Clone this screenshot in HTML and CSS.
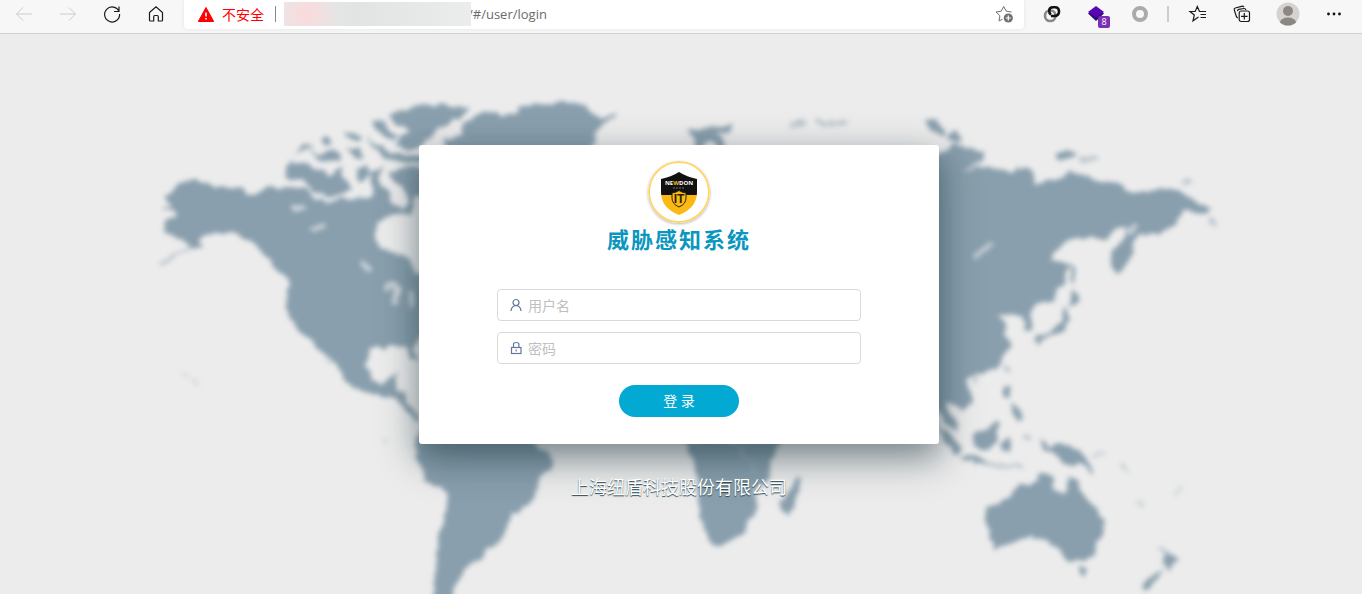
FILE: index.html
```html
<!DOCTYPE html>
<html lang="zh-CN">
<head>
<meta charset="utf-8">
<title>威胁感知系统</title>
<link rel="stylesheet" href="styles.css">
</head>
<body>
<header class="toolbar">
  <nav class="nav-group">
    <button class="tool faded" aria-label="后退"><svg viewBox="0 0 20 20"><path d="M18 10H2.500M9 3.500L2.500 10L9 16.500"/></svg></button>
    <button class="tool faded" aria-label="前进"><svg viewBox="0 0 20 20"><path d="M2 10H17.500M11 3.500L17.500 10L11 16.500"/></svg></button>
    <button class="tool" aria-label="刷新"><svg class="bold" viewBox="0 0 20 20"><path d="M17 7.500A7.500 7.500 0 1 0 17.600 10M17 2.500V7.500H12"/></svg></button>
    <button class="tool" aria-label="主页"><svg class="bold" viewBox="0 0 20 20"><path d="M3.500 8.500L10 2.700L16.500 8.500V16.200Q16.500 17 15.700 17H12.300V12.500Q12.300 11.500 11.300 11.500H8.700Q7.700 11.500 7.700 12.500V17H4.300Q3.500 17 3.500 16.200Z"/></svg></button>
  </nav>
  <div class="address">
    <svg class="warning" viewBox="0 0 16 15"><path d="M8 .5L15.700 14.500H.3Z" fill="#f00" stroke="#f00" stroke-linejoin="round"/><path d="M8 5.500V9.500M8 11V12.500" stroke="#fff" stroke-width="1.600"/></svg>
    <span class="insecure">不安全</span>
    <span class="address-rule"></span>
    <span class="masked-host"></span>
    <input class="url" type="text" aria-label="地址" value="/#/user/login">
    <button class="tool favorite" aria-label="添加到收藏夹"><svg viewBox="0 0 20 20"><path d="M8.500 15.200L5 17L5.900 11.800L2 8L7.200 7.200L9.700 2.500L12.200 7.200L17.500 8"/><circle cx="14.300" cy="14" r="4.600" fill="#707070" stroke="none"/><path d="M14.300 11.500V16.500M11.800 14H16.800" stroke="#fff" stroke-width="1.200"/></svg></button>
  </div>
  <div class="extension-group">
    <button class="tool" aria-label="链接扩展"><svg viewBox="0 0 20 20" stroke-width="2.600"><rect x="3" y="6.500" width="10.500" height="10.500" rx="5" stroke="#888"/><path d="M9 12H12Q17 12 17 7.500Q17 3.300 13 3.300H11Q7.200 3.300 7.200 7Q7.200 9.500 9 10.500" stroke="#111"/></svg></button>
    <button class="tool" aria-label="图层扩展"><svg viewBox="0 0 20 20" stroke="none"><path d="M2 9.500L10 4L18 9.500L10 17Z" fill="#2b0873"/><path d="M2 8L10 2L18 8L10 13.500Z" fill="#5807b3"/></svg><span class="count">8</span></button>
    <button class="tool" aria-label="圆环扩展"><svg viewBox="0 0 20 20"><circle cx="10" cy="10" r="6" stroke="#aaa" stroke-width="4"/></svg></button>
  </div>
  <span class="toolbar-rule"></span>
  <div class="menu-group">
    <button class="tool" aria-label="收藏夹"><svg class="bold" viewBox="0 0 20 20"><path d="M10.500 13L5 16.800L6.300 11L2 7.500H7.200L9.300 2.500L11.500 7.500H18M12.500 10.500H18M12.500 13.500H18"/></svg></button>
    <button class="tool" aria-label="集锦"><svg class="bold" viewBox="0 0 20 20"><path d="M5.800 14Q4.700 13.500 4.200 12L2.300 6Q1.800 4.500 3.300 4L9.500 2.300Q11 1.900 12 3M5.500 7.200Q5.200 5.700 6.700 5.300L12 4.500Q13.500 4.400 14 6"/><rect x="7.200" y="7" width="10.300" height="10.500" rx="2"/><path d="M12.300 9V15.500M9 12.300H15.600"/></svg></button>
    <button class="tool profile" aria-label="个人资料"><svg class="avatar" viewBox="0 0 24 24" stroke="none"><clipPath id="disc"><circle cx="12" cy="12" r="11.500"/></clipPath><g clip-path="url(#disc)"><path d="M0 0H24V24H0Z" fill="#d6d2cf"/><circle cx="12" cy="9" r="5" fill="#8d8783"/><ellipse cx="12" cy="20.500" rx="8" ry="5" fill="#8d8783"/></g></svg></button>
    <button class="tool" aria-label="更多"><svg viewBox="0 0 20 20" stroke="none" fill="#111"><circle cx="4.500" cy="10" r="1.400"/><circle cx="10" cy="10" r="1.400"/><circle cx="15.500" cy="10" r="1.400"/></svg></button>
  </div>
</header>

<main class="stage">
  <svg class="map" viewBox="0 34 1362 560" preserveAspectRatio="xMidYMin slice" aria-hidden="true">
    <defs>
      <filter id="soft" x="-5%" y="-5%" width="110%" height="110%" color-interpolation-filters="sRGB">
        <feTurbulence type="fractalNoise" baseFrequency=".08" numOctaves="2" seed="4" result="noise"/>
        <feDisplacementMap in="SourceGraphic" in2="noise" scale="9" xChannelSelector="R" yChannelSelector="G"/>
        <feGaussianBlur stdDeviation="2.500"/>
      </filter>
    </defs>
    <g filter="url(#soft)">
      <g fill="#899fad">
        <path d="M162 210L171 206L165 196L178 186L192 180L205 185L240 188L252 194L268 188L290 187L305 189L315 199L330 201L342 198L352 200L372 196L380 190L392 198L402 212L390 215L380 222L374 235L380 246L395 254L410 260L416 272L500 260L500 300L419 338L413 350L419 362L412 358L407 348L395 346L383 349L369 349L366 365L370 380L383 384L389 376L397 374L394 389L407 393L406 405L419 414V419L405 412L395 399L380 393L365 392L350 385L343 377L339 366L322 352L310 339L298 330L290 318L286 305L289 285L283 276L275 268L265 256L253 244L240 235L222 232L208 236L200 238L204 248L192 246L170 234L163 229L167 221L178 219L177 211Z"/>
        <path d="M286 178V166L293 161L304 164L315 169L330 174L342 168L345 180L352 188L346 194L325 197L312 192L303 178L295 179Z"/>
        <path d="M293 154L305 145L315 146L302 153Z"/>
        <path d="M307 149L320 154L335 149L341 160L325 162Z"/>
        <path d="M319 138L329 136L332 143L323 146Z"/>
        <path d="M343 131L360 135L362 141L350 139Z"/>
        <path d="M345 149L360 148L367 158L355 157Z"/>
        <path d="M356 170L367 166L370 176L362 181L355 178Z"/>
        <path d="M370 172L383 166L379 178L392 196L376 198L372 188Z"/>
        <path d="M368 135L378 145L390 152L422 155V163L390 161L378 153Z"/>
        <path d="M389 172L408 166L440 170V200L415 196L410 218L400 213L408 202L402 186L394 182Z"/>
        <path d="M372 119L382 121L398 133L395 140L386 138L373 128Z"/>
        <path d="M387 116L400 110L418 107L445 104L471 108L460 118L440 128L425 141L415 150L395 148L399 137L409 130L396 124Z"/>
        <path d="M443 139L460 137L463 124L475 116L490 111L502 115L518 112L519 105L545 104L565 101L585 105L592 112L602 117L618 115L605 123L597 134L594 145L580 170L450 150Z"/>
        <path d="M687 129L700 129L710 126L733 126L730 131L715 133L726 145L720 150L710 140L700 150L692 138Z"/>
        <path d="M926 121L934 120L944 129L942 135L930 130ZM945 135L957 132L963 141L950 141Z"/>
        <path d="M900 160L939 154L950 149L958 142L966 149L984 150L983 160L977 166L998 168L1011 173L1018 167L1030 169L1034 184L1050 180L1063 180L1070 168L1077 175L1090 176L1103 183L1118 182L1125 190L1150 192L1156 189L1175 190L1190 197L1200 205L1211 207L1204 216L1192 210L1181 212L1178 218L1180 224L1165 230L1158 234L1140 235L1133 240L1132 258L1122 268L1115 273L1111 262L1112 250L1122 243L1128 230L1125 228L1113 230L1105 240L1085 238L1068 240L1057 252L1052 260L1068 263L1066 275L1060 290L1050 302L1035 305L1030 313L1033 332L1026 332L1024 318L1012 314L999 317L1006 325L1005 335L1009 346L1005 358L995 368L980 374L967 377L963 382L970 394L972 402L962 411L953 405L945 400L946 408L957 424L959 435L950 428L938 410L900 400Z"/>
        <path d="M936 423L950 435L962 450L957 454L946 442ZM960 454L986 460V464L965 461Z"/>
        <path d="M973 435L985 431L997 419L1000 424L996 440L990 450L980 449L974 443Z"/>
        <path d="M1001 444L1010 438L1008 453L1002 451ZM1004 384L1011 385L1010 397L1004 395ZM1011 404L1020 408L1024 419L1018 423L1013 416Z"/>
        <path d="M1038 440L1045 442L1050 448L1060 445L1075 449L1085 457L1094 473L1078 463L1073 467L1063 464L1058 456L1045 450Z"/>
        <path d="M1071 290L1081 300L1069 306ZM1067 308L1070 318L1064 331L1050 335L1036 343L1035 337L1050 331L1060 322L1064 310ZM1068 262L1074 269L1076 282L1071 280Z"/>
        <path d="M985 507L1000 503L1010 498L1018 484L1031 484L1040 474L1052 475L1053 486L1063 493L1067 490L1069 474L1077 482L1083 495L1095 508L1103 522L1102 537L1094 552L1085 560L1068 560L1060 550L1045 540L1030 537L1010 542L993 549L990 535L985 520Z"/>
        <path d="M1077 568H1088L1083 579ZM1165 554L1177 560L1169 568L1163 564ZM1163 567L1157 578L1148 590L1142 586L1150 577Z"/>
        <path d="M415 446L420 430H520L535 446L548 453L553 462L540 478L535 497L528 507L513 513L508 525L497 543L486 548L484 558L472 563L462 575L455 590V610H431L436 570L438 540L444 515L447 497L440 488L427 480L416 460Z"/>
        <path d="M683 440L693 455L696 475L698 500L702 520L708 543L714 546L730 543L742 532L749 520L757 508L755 492L768 478L773 455L783 440Z"/>
        <path d="M797 477L801 480L795 503L789 515L782 513L781 502L789 492Z"/>
        <path d="M1057 154L1066 151L1078 155L1070 160L1058 159Z"/>
      </g>
      <g fill="none" stroke="#899fad" stroke-linecap="round" opacity=".5">
        <path d="M192 246Q175 258 160 264M986 464L1022 467M1094 456L1103 452M1122 465L1128 470" stroke-width="3"/>
        <path d="M791 124L804 122M818 121L825 125L830 120M832 124L847 121" stroke-width="5"/>
        <path d="M1083 159L1094 160M1183 181L1188 181M1007 366V369M974 379V381M1026 436L1029 437M1161 548L1167 554M1212 221L1214 223" stroke-width="5"/>
        <path d="M183 374L187 377M193 380L196 382M385 440V441M1137 502L1141 506M1176 493L1180 490M320 344L330 362" stroke-width="4" opacity=".5"/>
      </g>
      <g fill="none" stroke="#e4e7e9" stroke-linecap="round">
        <path d="M295 208H301M315 229L323 226M363 264L367 270M386 287L396 284M398 288L395 302M411 294V304" stroke-width="6" opacity=".75"/>
        <path d="M977 257L989 245M965 169L979 163M1130 231L1135 226M318 195L328 199L338 198M355 197L363 192" stroke-width="5" opacity=".65"/>
        <path d="M740 445L744 462M753 460L754 474" stroke-width="2" opacity=".3"/>
      </g>
    </g>
  </svg>

  <form class="card" onsubmit="return false">
    <svg class="logo" viewBox="0 0 62 62" role="img" aria-label="NEWDON IT">
      <circle cx="31" cy="31" r="30" fill="#fff" stroke="#ffd666" stroke-width="2"/>
      <clipPath id="shield"><path d="M13 18Q23 16 31 11Q39 16 49 18V31Q49 47 31 54Q13 47 13 31Z"/></clipPath>
      <g clip-path="url(#shield)"><path d="M12 10H50V34H12Z" fill="#111"/><path d="M12 34H50V55H12Z" fill="#fdb913"/></g>
      <path d="M24 32Q28 31.500 31 29.500Q34 31.500 38 32V37Q38 43 31 46Q24 43 24 37Z" fill="#fdb913" stroke="#2b2108"/>
      <text class="logo-name" x="31" y="24" text-anchor="middle">NE<tspan fill="#fdb913">W</tspan>DON</text>
      <path d="M25 27H37" stroke="#777" stroke-dasharray="2 1"/>
      <text class="logo-it" x="31" y="42" text-anchor="middle">IT</text>
    </svg>
    <h1 class="title">威胁感知系统</h1>
    <div class="fields">
      <label class="field">
        <svg viewBox="0 0 14 14"><circle cx="7" cy="4.500" r="3"/><path d="M2 13Q2.400 8 7 7.500Q11.600 8 12 13"/></svg>
        <input type="text" placeholder="用户名" aria-label="用户名">
      </label>
      <label class="field">
        <svg viewBox="0 0 14 14"><rect x="2.500" y="6.500" width="9.500" height="6"/><path d="M4.500 6.500V3.500Q4.500 1.500 7.200 1.500Q9.900 1.500 9.900 3.500V6.500M7.200 8.500V10.500"/></svg>
        <input type="password" placeholder="密码" aria-label="密码">
      </label>
    </div>
    <button class="submit" type="submit">登 录</button>
  </form>
  <p class="company">上海纽盾科技股份有限公司</p>
</main>
</body>
</html>
```
FILE: styles.css
```css
* { box-sizing: border-box; }

body {
  margin: 0;
  min-height: 100vh;
  display: flex;
  flex-direction: column;
  font-family: "Open Sans", "Noto Sans CJK SC", sans-serif;
  font-size: 14px;
  background: #ececec;
}

button, input { font: inherit; border: 0; outline: 0; }
button { cursor: pointer; }

.toolbar {
  display: flex;
  align-items: flex-start;
  height: 34px;
  padding: 0 6px 0 2px;
  background: #f7f7f7;
  border-bottom: 1px solid #d0d0d0;
}

.nav-group, .extension-group, .menu-group { display: flex; }
.extension-group { margin-left: 6px; }

.tool {
  display: flex;
  align-items: center;
  justify-content: center;
  position: relative;
  width: 44px;
  height: 28px;
  padding: 0;
  background: none;
}
.tool svg { width: 20px; height: 20px; fill: none; stroke: #707070; }
.tool svg[stroke="none"] { stroke: none; }
.tool svg[fill="#111"] { fill: #111; }
.tool svg.bold { stroke: #1b1b1b; stroke-width: 1.2; }
.tool.faded svg { stroke: #ccc; }
.tool.profile { width: 48px; }
.tool svg.avatar { width: 24px; height: 24px; }

.count {
  position: absolute;
  right: 8px;
  bottom: 0;
  width: 12px;
  height: 12px;
  border-radius: 2px;
  background: #7b2fb5;
  color: #fff;
  font-size: 9px;
  line-height: 12px;
}

.address {
  flex: 1;
  display: flex;
  align-items: center;
  height: 29px;
  min-width: 0;
  margin-left: 6px;
  padding: 0 0 1px 14px;
  background: #fff;
  border-radius: 0 0 4px 4px;
  box-shadow: 0 0 4px rgba(0, 0, 0, .08);
}
.warning { width: 16px; height: 15px; }
.insecure { margin-left: 8px; color: #f00; white-space: nowrap; }
.address-rule { width: 1px; height: 16px; margin: 0 8px 0 11px; background: #888; }
.masked-host {
  position: relative;
  width: 187px;
  height: 24px;
  background: radial-gradient(circle at 22px 12px, #fbd9da, rgba(251, 217, 218, 0) 34px), linear-gradient(90deg, #e8e9e9, #e2e4e4 40%, #ebecec);
}
.url { flex: 1; min-width: 0; margin-left: -3px; padding: 0; font-size: 13px; color: #6b6b6b; background: none; }
.address .favorite { width: 40px; }

.toolbar-rule { width: 2px; height: 16px; margin: 6px 7px 0 5px; background: #ccc; }

.stage {
  flex: 1;
  position: relative;
  display: flex;
  flex-direction: column;
  align-items: center;
  padding: 111px 4px 0 0;
  overflow: hidden;
}

.map { position: absolute; inset: 0; width: 100%; height: 100%; }

.card {
  position: relative;
  display: flex;
  flex-direction: column;
  align-items: center;
  width: 520px;
  max-width: 100%;
  padding: 16px 78px 27px;
  background: #fff;
  border-radius: 3px;
  box-shadow: 0 14px 45px rgba(10, 35, 48, .3), 0 12px 28px rgba(10, 35, 48, .3);
}

.logo { width: 62px; height: 62px; border-radius: 50%; box-shadow: 0 1px 3px rgba(0, 0, 0, .3); }
.logo-name { font: 700 6px "Open Sans", sans-serif; fill: #fff; }
.logo-it { font: 700 12px "Liberation Sans", sans-serif; fill: #2b2108; }

.title {
  margin: 0 0 34px;
  font-size: 22px;
  line-height: 32px;
  font-weight: 700;
  letter-spacing: 2px;
  color: #0b96c0;
}

.fields { display: flex; flex-direction: column; gap: 11px; width: 100%; }

.field {
  display: flex;
  align-items: center;
  gap: 5px;
  height: 32px;
  padding: 0 11px;
  border: 1px solid #d9d9d9;
  border-radius: 4px;
}
.field svg { width: 14px; height: 14px; fill: none; stroke: #65779b; stroke-width: 1.2; }
.field input { flex: 1; min-width: 0; padding: 0; background: none; }
.field input::placeholder { color: #bfbfbf; opacity: 1; }

.submit {
  width: 120px;
  height: 32px;
  margin-top: 21px;
  padding: 0 0 2px;
  border-radius: 16px;
  background: #02a9d3;
  color: #fff;
}

.company {
  position: relative;
  margin: 29px 0 0;
  font-size: 18px;
  line-height: 28px;
  color: #fff;
  text-shadow: 0 1px 1px #22414f;
}
```
